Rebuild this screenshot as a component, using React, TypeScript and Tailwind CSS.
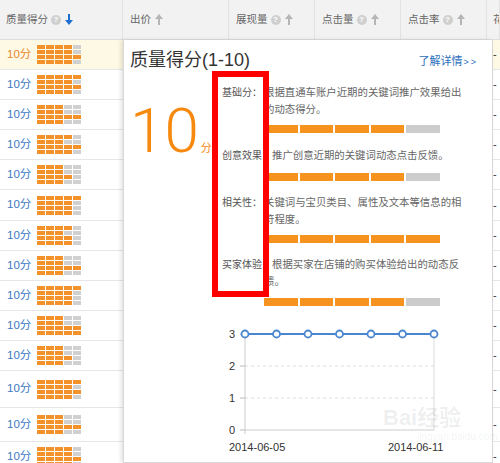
import React from "react";

const SANS = "font-['Liberation_Sans','Noto_Sans_CJK_SC',sans-serif]";

const columns = [
  { label: "质量得分", width: "w-[123px] shrink-0 pl-[6px]", help: true, sort: "down" },
  { label: "出价", width: "w-[106px] shrink-0 pl-[7px]", help: false, sort: "up" },
  { label: "展现量", width: "w-[86px] shrink-0 pl-[7px]", help: true, sort: "up" },
  { label: "点击量", width: "w-[86px] shrink-0 pl-[7px]", help: true, sort: "up" },
  { label: "点击率", width: "w-[86px] shrink-0 pl-[7px]", help: true, sort: "up" },
  { label: "花费", width: "min-w-0 flex-1 overflow-hidden pl-[6px]", help: false, sort: "none" },
];

// filled cells per line of the 5x4 score grid
const rows = [
  { h: "h-[30px]", grid: [4, 4, 5, 4], active: true },
  { h: "h-[30px]", grid: [5, 4, 5, 4] },
  { h: "h-[30px]", grid: [3, 3, 5, 3] },
  { h: "h-[30px]", grid: [4, 3, 5, 4] },
  { h: "h-[30px]", grid: [3, 3, 4, 3] },
  { h: "h-[31px]", grid: [5, 4, 4, 4] },
  { h: "h-[30px]", grid: [4, 3, 4, 4] },
  { h: "h-[30px]", grid: [3, 3, 5, 3] },
  { h: "h-[30px]", grid: [5, 4, 4, 4] },
  { h: "h-[30px]", grid: [3, 3, 5, 5] },
  { h: "h-[30px]", grid: [3, 3, 4, 3] },
  { h: "h-[37px]", grid: [5, 4, 5, 4] },
  { h: "h-[34px]", grid: [3, 3, 5, 3] },
  { h: "h-[30px]", grid: [4, 4, 5, 4] },
];

const items = [
  {
    label: "基础分：",
    desc: "根据直通车账户近期的关键词推广效果给出的动态得分。",
    score: 4,
    bar: "mt-[7px]",
    gap: "",
  },
  {
    label: "创意效果：",
    desc: "推广创意近期的关键词动态点击反馈。",
    score: 4,
    bar: "mt-[9px]",
    gap: "mt-[14px]",
  },
  {
    label: "相关性：",
    desc: "关键词与宝贝类目、属性及文本等信息的相符程度。",
    score: 5,
    bar: "mt-[7px]",
    gap: "mt-[13px]",
  },
  {
    label: "买家体验：",
    desc: "根据买家在店铺的购买体验给出的动态反馈。",
    score: 4,
    bar: "mt-[8px]",
    gap: "mt-[13px]",
  },
];

function HelpIcon() {
  return (
    <span className="ml-[3px] inline-flex h-[10px] w-[10px] items-center justify-center rounded-full bg-[#cfcfcf] text-[8px] font-bold leading-none text-white">
      ?
    </span>
  );
}

function SortArrow({ dir }: { dir: string }) {
  if (dir === "none") return null;
  const color = dir === "down" ? "#1f6fd0" : "#b5b5b5";
  return (
    <svg width="8" height="11" viewBox="0 0 8 11" className="ml-[4px] shrink-0">
      {dir === "down" ? (
        <path d="M3 0h2v6h3L4 11 0 6h3z" fill={color} />
      ) : (
        <path d="M3 11h2V5h3L4 0 0 5h3z" fill={color} />
      )}
    </svg>
  );
}

function ScoreGrid({ grid }: { grid: number[] }) {
  return (
    <div className="flex flex-col gap-[1px]">
      {grid.map((n, r) => (
        <div key={r} className="flex gap-[1px]">
          {[0, 1, 2, 3, 4].map((c) => (
            <div
              key={c}
              className={`h-[4px] w-[8px] ${c < n ? "bg-[#f3922a]" : "bg-[#d0d0d0]"}`}
            />
          ))}
        </div>
      ))}
    </div>
  );
}

function Chart() {
  const xs = [25, 56.5, 88, 119.5, 151, 182.5, 214];
  return (
    <svg width="260" height="150" className="-ml-[2px] block">
      <line x1="214" y1="14" x2="214" y2="114" stroke="#dcdcdc" />
      <line x1="25" y1="50" x2="214" y2="50" stroke="#dcdcdc" strokeDasharray="3 3" />
      <line x1="25" y1="82" x2="214" y2="82" stroke="#dcdcdc" strokeDasharray="3 3" />
      <line x1="25" y1="14" x2="25" y2="118" stroke="#cccccc" />
      <line x1="25" y1="114" x2="214" y2="114" stroke="#cccccc" />
      {[18, 50, 82, 114].map((y) => (
        <line key={y} x1="20" y1={y} x2="25" y2={y} stroke="#bbbbbb" />
      ))}
      {["3", "2", "1", "0"].map((t, i) => (
        <text
          key={t}
          x="15"
          y={22 + i * 32}
          textAnchor="end"
          fontSize="11"
          fill="#333"
          fontFamily="Liberation Sans"
        >
          {t}
        </text>
      ))}
      <text x="9" y="135" fontSize="11" fill="#333" fontFamily="Liberation Sans">
        2014-06-05
      </text>
      <text x="168" y="135" fontSize="11" fill="#333" fontFamily="Liberation Sans">
        2014-06-11
      </text>
      <line x1="25" y1="18" x2="214" y2="18" stroke="#4a86d0" strokeWidth="2" />
      {xs.map((x) => (
        <circle key={x} cx={x} cy="18" r="3.5" fill="#fff" stroke="#4a86d0" strokeWidth="1.8" />
      ))}
    </svg>
  );
}

export default function App() {
  return (
    <div className={`relative h-[463px] w-[500px] overflow-hidden bg-white ${SANS}`}>
      {/* Table header */}
      <div className="flex h-[40px] border-b border-[#dedede] bg-[#f2f2f2] text-[10.5px] text-[#666]">
        {columns.map((c) => (
          <div
            key={c.label}
            className={`flex items-center border-r border-[#e2e2e2] ${c.width} whitespace-nowrap`}
          >
            <span>{c.label}</span>
            {c.help && <HelpIcon />}
            <SortArrow dir={c.sort} />
          </div>
        ))}
      </div>

      {/* Table rows */}
      {rows.map((r, i) => (
        <div
          key={i}
          className={`flex border-b border-[#e6e6e6] ${r.h} ${r.active ? "bg-[#fdf9e4]" : "bg-white"}`}
        >
          <div className="flex w-[123px] shrink-0 items-center pl-[7px]">
            <span
              className={`w-[30px] text-[11.5px] ${r.active ? "text-[#e8872d]" : "text-[#3b78c4]"}`}
            >
              10分
            </span>
            <ScoreGrid grid={r.grid} />
          </div>
          <div className="w-[364px] shrink-0" />
          <div className="flex min-w-0 flex-1 items-center pl-[6px] text-[11px] text-[#333]">-</div>
        </div>
      ))}

      {/* Quality score popover */}
      <div className="absolute left-[123px] top-[40px] h-[423px] w-[370px] overflow-hidden border border-t-0 border-[#d8d8d8] bg-white pl-[6px] pr-[5px] shadow-[-2px_0_4px_rgba(0,0,0,0.12)]">
        <div className="flex items-end justify-between pt-[8px]">
          <div className="text-[18px] leading-[24px] text-[#333]">质量得分(1-10)</div>
          <a className="mb-[1px] mr-[9px] text-[11px] leading-[18px] text-[#2a6ebb]">
            了解详情<span className="ml-[1px] text-[9px] tracking-[2px]">&gt;&gt;</span>
          </a>
        </div>
        <div className="mt-[12px] flex">
          <div className="w-[92px] shrink-0 pt-[16px] whitespace-nowrap">
            <span className="font-['Roboto',sans-serif] text-[62px] font-light leading-[62px] text-[#f7890f]">
              10
            </span>
            <span className="ml-[2px] text-[11px] text-[#f7890f]">分</span>
          </div>
          <div className="flex flex-col">
            {items.map((it) => (
              <div key={it.label} className={it.gap}>
                <div className="w-[244px] pl-[42px] text-[10.4px] leading-[17px] text-[#666]">
                  <span className="float-left -ml-[42px] min-w-[42px] whitespace-nowrap text-[10px] text-[#555]">
                    {it.label}
                  </span>
                  {it.desc}
                </div>
                <div className={`ml-[42px] flex gap-[2px] ${it.bar}`}>
                  {[0, 1, 2, 3, 4].map((s) => (
                    <div
                      key={s}
                      className={`h-[8px] w-[33.6px] ${s < it.score ? "bg-[#f6921e]" : "bg-[#cccccc]"}`}
                    />
                  ))}
                </div>
              </div>
            ))}
            <div className="mt-[10px]">
              <Chart />
            </div>
          </div>
        </div>
      </div>

      {/* Watermark */}
      <div className="pointer-events-none absolute left-[383px] top-[405px] flex flex-col items-start text-[#000]/[0.07]">
        <span className="text-[22px] leading-[26px] font-bold">Bai经验</span>
        <span className="ml-[34px] text-[10px] leading-[12px]">jingyan.baidu.com</span>
      </div>

      {/* Red annotation box */}
      <div className="absolute left-[212px] top-[71px] h-[226px] w-[57px] border-[6px] border-[#fe0000]" />
    </div>
  );
}
